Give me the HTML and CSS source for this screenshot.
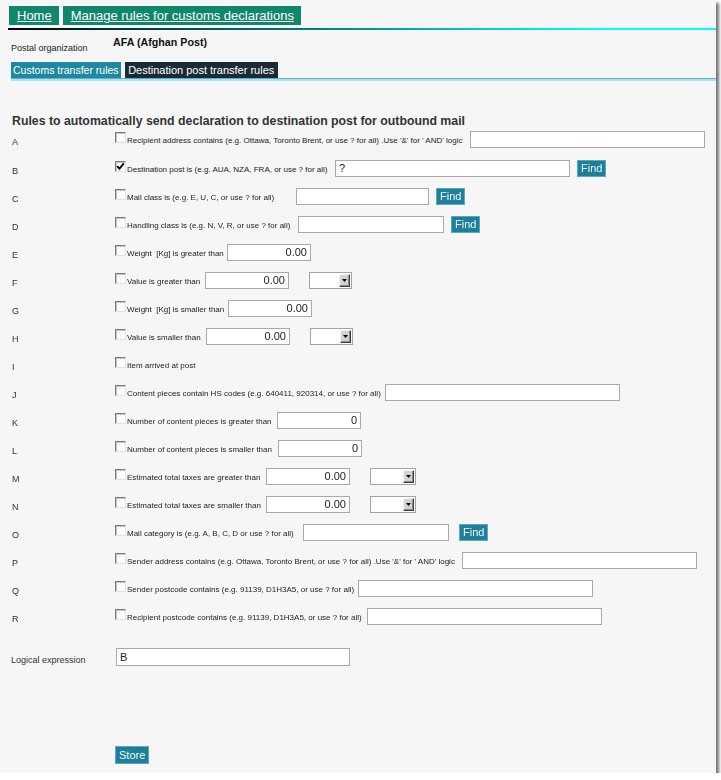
FILE: index.html
```html
<!DOCTYPE html>
<html lang="en">
<head>
<meta charset="utf-8">
<title>Manage rules for customs declarations</title>
<link rel="stylesheet" href="styles.css">
</head>
<body>
<div class="page">
  <nav class="topnav">
    <a class="navlink" href="#">Home</a>
    <a class="navlink" href="#">Manage rules for customs declarations</a>
  </nav>
  <div class="gradline"></div>

  <div class="org">
    <span class="org-label">Postal organization</span>
    <span class="org-value">AFA (Afghan Post)</span>
  </div>

  <div class="tabs">
    <a class="tab tab-customs" href="#">Customs transfer rules</a>
    <a class="tab tab-dest" href="#">Destination post transfer rules</a>
  </div>
  <div class="tabline"></div>

  <h2 class="title">Rules to automatically send declaration to destination post for outbound mail</h2>

  <div class="rules">
    <div class="rule rule-a"><span class="letter">A</span><span class="cb"></span><span class="lbl">Recipient address contains (e.g. Ottawa, Toronto Brent, or use ? for all) .Use '&amp;' for ' AND' logic</span><input class="txt long" type="text"></div>
    <div class="rule rule-b"><span class="letter">B</span><span class="cb"><svg width="9" height="9" viewBox="0 0 9 9"><polyline points="1.3,4.2 3.4,6.8 7.8,1.4" fill="none" stroke="#000" stroke-width="1.9"/></svg></span><span class="lbl">Destination post is (e.g. AUA, NZA, FRA, or use ? for all)</span><input class="txt long" type="text" value="?" autofocus><button class="btn">Find</button></div>
    <div class="rule rule-c"><span class="letter">C</span><span class="cb"></span><span class="lbl">Mail class is (e.g. E, U, C, or use ? for all)</span><input class="txt short" type="text"><button class="btn">Find</button></div>
    <div class="rule rule-d"><span class="letter">D</span><span class="cb"></span><span class="lbl">Handling class is (e.g. N, V, R, or use ? for all)</span><input class="txt mid" type="text"><button class="btn">Find</button></div>
    <div class="rule rule-e"><span class="letter">E</span><span class="cb"></span><span class="lbl">Weight&nbsp; [Kg] is greater than</span><input class="txt num" type="text" value="0.00"></div>
    <div class="rule rule-f"><span class="letter">F</span><span class="cb"></span><span class="lbl">Value is greater than</span><input class="txt num" type="text" value="0.00"><span class="sel"><span class="sel-btn"><svg width="5" height="3" viewBox="0 0 5 3"><polygon points="0,0 5,0 2.5,3" fill="#000"/></svg></span></span></div>
    <div class="rule rule-g"><span class="letter">G</span><span class="cb"></span><span class="lbl">Weight&nbsp; [Kg] is smaller than</span><input class="txt num" type="text" value="0.00"></div>
    <div class="rule rule-h"><span class="letter">H</span><span class="cb"></span><span class="lbl">Value is smaller than</span><input class="txt num" type="text" value="0.00"><span class="sel"><span class="sel-btn"><svg width="5" height="3" viewBox="0 0 5 3"><polygon points="0,0 5,0 2.5,3" fill="#000"/></svg></span></span></div>
    <div class="rule rule-i"><span class="letter">I</span><span class="cb"></span><span class="lbl">Item arrived at post</span></div>
    <div class="rule rule-j"><span class="letter">J</span><span class="cb"></span><span class="lbl">Content pieces contain HS codes (e.g. 640411, 920314, or use ? for all)</span><input class="txt long" type="text"></div>
    <div class="rule rule-k"><span class="letter">K</span><span class="cb"></span><span class="lbl">Number of content pieces is greater than</span><input class="txt num" type="text" value="0"></div>
    <div class="rule rule-l"><span class="letter">L</span><span class="cb"></span><span class="lbl">Number of content pieces is smaller than</span><input class="txt num" type="text" value="0"></div>
    <div class="rule rule-m"><span class="letter">M</span><span class="cb"></span><span class="lbl">Estimated total taxes are greater than</span><input class="txt num" type="text" value="0.00"><span class="sel sel-wide"><span class="sel-btn"><svg width="5" height="3" viewBox="0 0 5 3"><polygon points="0,0 5,0 2.5,3" fill="#000"/></svg></span></span></div>
    <div class="rule rule-n"><span class="letter">N</span><span class="cb"></span><span class="lbl">Estimated total taxes are smaller than</span><input class="txt num" type="text" value="0.00"><span class="sel sel-wide"><span class="sel-btn"><svg width="5" height="3" viewBox="0 0 5 3"><polygon points="0,0 5,0 2.5,3" fill="#000"/></svg></span></span></div>
    <div class="rule rule-o"><span class="letter">O</span><span class="cb"></span><span class="lbl">Mail category is (e.g. A, B, C, D or use ? for all)</span><input class="txt mid" type="text"><button class="btn btn-far">Find</button></div>
    <div class="rule rule-p"><span class="letter">P</span><span class="cb"></span><span class="lbl">Sender address contains (e.g. Ottawa, Toronto Brent, or use ? for all) .Use '&amp;' for ' AND' logic</span><input class="txt long" type="text"></div>
    <div class="rule rule-q"><span class="letter">Q</span><span class="cb"></span><span class="lbl">Sender postcode contains (e.g. 91139, D1H3A5, or use ? for all)</span><input class="txt long" type="text"></div>
    <div class="rule rule-r"><span class="letter">R</span><span class="cb"></span><span class="lbl">Recipient postcode contains (e.g. 91139, D1H3A5, or use ? for all)</span><input class="txt long" type="text"></div>
  </div>

  <div class="logic">
    <span class="logic-label">Logical expression</span>
    <input class="txt logic-input" type="text" value="B">
  </div>

  <div class="actions">
    <button class="btn btn-store">Store</button>
  </div>
</div>
</body>
</html>
```

FILE: styles.css
```css
html, body {
  margin: 0;
  padding: 0;
  background: #ffffff;
}

body {
  font-family: "Liberation Sans", Arial, sans-serif;
  color: #222;
}

.page {
  width: 716px;
  height: 773px;
  background: #f6f6f6;
  box-shadow: 3px 3px 3px rgba(0, 0, 0, 0.55);
  overflow: hidden;
}

/* top navigation */
.topnav {
  display: flex;
  gap: 4px;
  padding: 6px 0 0 9px;
}

.navlink {
  display: block;
  height: 19px;
  line-height: 19px;
  padding: 0 7px 0 8px;
  background: #0e876a;
  color: #fff;
  font-size: 13px;
  text-decoration: underline;
}

.gradline {
  height: 2px;
  margin: 3px 0 0 8px;
  background: linear-gradient(to right, #000 0%, #033 15%, #066 35%, #099 52%, #0dd 72%, #0ff 85%, #0ff 100%);
}

/* postal organization */
.org {
  display: flex;
  height: 26px;
  margin-top: 6px;
  padding-left: 11px;
}

.org-label {
  width: 102px;
  flex: none;
  padding-top: 7px;
  font-size: 9px;
  line-height: 11px;
  color: #222;
}

.org-value {
  font-size: 10.7px;
  line-height: 13px;
  font-weight: bold;
  color: #111;
}

/* tabs */
.tabs {
  display: flex;
  gap: 4px;
  height: 16px;
  padding-left: 11px;
}

.tab {
  display: block;
  height: 16px;
  line-height: 16px;
  color: #fff;
  text-decoration: none;
  font-size: 11px;
}

.tab-customs {
  background: #1f88a1;
  font-size: 10.5px;
  padding: 0 2px;
}

.tab-dest {
  background: #1b2a37;
  padding: 0 3.5px;
}

.tabline {
  height: 2px;
  margin-left: 11px;
  border-top: 1px solid #5db3c6;
  background: #ace2ed;
}

/* heading */
.title {
  margin: 35px 0 -1px 12px;
  height: 10px;
  font-size: 12.3px;
  line-height: 10px;
  font-weight: bold;
  color: #333;
  white-space: nowrap;
}

/* rules */
.rules {
  padding-left: 12px;
}

.rule {
  display: flex;
  align-items: center;
  height: 28px;
}

.rule-a {
  height: 29px;
}

.letter {
  align-self: flex-start;
  flex: none;
  width: 103px;
  margin-top: 3px;
  font-size: 9px;
  line-height: 28px;
  color: #333;
}

.cb {
  flex: none;
  box-sizing: border-box;
  width: 11px;
  height: 11px;
  margin-bottom: 4px;
  border: 1px solid;
  border-color: #7c7c7c #e2e2e2 #e2e2e2 #7c7c7c;
  box-shadow: inset 1px 1px 0 #c4c4c4;
  background: #fff;
  display: flex;
  align-items: center;
  justify-content: center;
}

.cb svg {
  display: block;
}

.lbl {
  flex: none;
  margin-left: 1px;
  padding-top: 2px;
  font-size: 8px;
  color: #222;
  white-space: nowrap;
}

.rule-a .lbl { width: 343px; }
.rule-b .lbl { width: 208px; }
.rule-c .lbl { width: 169px; }
.rule-d .lbl { width: 171px; }
.rule-e .lbl { width: 100px; }
.rule-f .lbl { width: 78px; }
.rule-g .lbl { width: 101px; }
.rule-h .lbl { width: 79px; }
.rule-j .lbl { width: 258px; }
.rule-k .lbl { width: 150px; }
.rule-l .lbl { width: 151px; }
.rule-m .lbl { width: 139px; }
.rule-n .lbl { width: 139px; }
.rule-o .lbl { width: 176px; }
.rule-p .lbl { width: 335px; }
.rule-q .lbl { width: 231px; }
.rule-r .lbl { width: 240px; }

/* inputs */
.txt {
  flex: none;
  box-sizing: border-box;
  height: 17px;
  margin: 0;
  padding: 0 3px;
  border: 1px solid #a9a9a9;
  border-radius: 0;
  background: #fff;
  font-family: "Liberation Sans", Arial, sans-serif;
  font-size: 11px;
  color: #222;
  caret-color: #000;
}

.txt:focus {
  outline: none;
}

.txt.long { width: 235px; }
.txt.mid { width: 146px; }
.txt.short { width: 133px; }
.txt.num {
  width: 84px;
  text-align: right;
}

/* select look-alike */
.sel {
  flex: none;
  box-sizing: border-box;
  width: 43px;
  height: 17px;
  margin-left: 20px;
  padding: 1px;
  border: 1px solid #a4a4a4;
  background: #fff;
  display: flex;
  justify-content: flex-end;
}

.sel-wide {
  width: 46px;
}

.sel-btn {
  box-sizing: border-box;
  width: 11px;
  height: 13px;
  border: 1px solid;
  border-color: #f6f6f6 #404040 #404040 #f6f6f6;
  box-shadow: inset -1px -1px 0 #8a8a8a;
  background: #d6d3cc;
  display: flex;
  align-items: center;
  justify-content: center;
}

.sel-btn svg {
  display: block;
}

/* buttons */
.btn {
  flex: none;
  box-sizing: border-box;
  height: 17px;
  margin: 0 0 0 7px;
  padding: 0 3px;
  border: 1px solid #5aa9bd;
  border-radius: 0;
  background: #1d7f98;
  color: #eef8fb;
  font-family: "Liberation Sans", Arial, sans-serif;
  font-size: 11px;
  line-height: 15px;
}

.btn-far {
  margin-left: 10px;
}

/* logical expression */
.logic {
  display: flex;
  align-items: center;
  height: 28px;
  margin-top: 13px;
  padding-left: 11px;
}

.logic-label {
  align-self: flex-start;
  flex: none;
  width: 105px;
  margin-top: 3px;
  font-size: 9px;
  line-height: 28px;
  color: #333;
}

.logic-input {
  width: 234px;
  height: 18px;
}

.actions {
  margin-top: 74px;
  padding-left: 115px;
}

.btn-store {
  height: 18px;
  margin: 0;
  line-height: 16px;
}
```
